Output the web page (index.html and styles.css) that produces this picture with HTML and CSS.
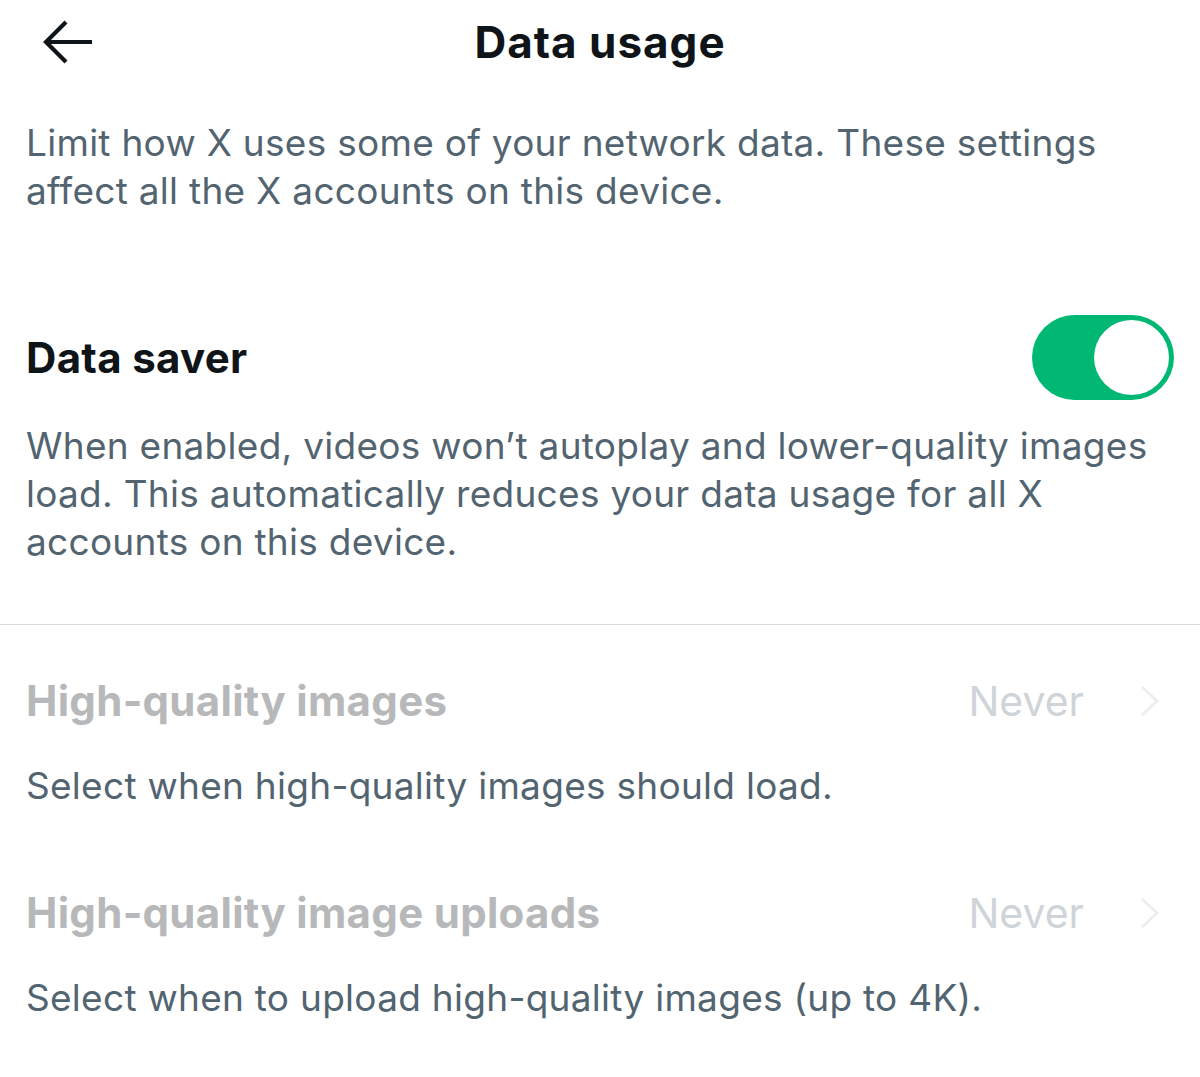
FILE: index.html
```html
<!DOCTYPE html>
<html lang="en">
    <head>
        <meta charset="UTF-8" />
        <meta name="viewport" content="width=device-width, initial-scale=1.0" />
        <title>Data usage</title>
        <link rel="stylesheet" href="styles.css">
    </head>
    <body>
        <div id="main">
            <div class="header">
                <a href="#" class="back" aria-label="Back">
                    <svg width="52" height="46" viewBox="0 0 52 46">
                        <path d="M4 23 H50 M24 3 L4 23 L24 43" fill="none" stroke="#0f1419" stroke-width="4.2" />
                    </svg>
                </a>
                <h1>Data usage</h1>
            </div>

            <p class="intro">Limit how X uses some of your network data. These settings affect all the X accounts on this device.</p>

            <div class="setting-row saver">
                <h2>Data saver</h2>
                <div class="toggle on"><span class="knob"></span></div>
            </div>
            <p class="desc saver-desc">When enabled, videos won’t autoplay and lower-quality images load. This automatically reduces your data usage for all X accounts on this device.</p>

            <div class="divider"></div>

            <div class="setting-row option first">
                <h2>High-quality images</h2>
                <div class="value">
                    <span>Never</span>
                    <svg width="24" height="34" viewBox="0 0 24 34"><path d="M4 3 L19 17 L4 31" fill="none" stroke="#eceef0" stroke-width="3" /></svg>
                </div>
            </div>
            <p class="desc option-desc">Select when high-quality images should load.</p>

            <div class="setting-row option">
                <h2>High-quality image uploads</h2>
                <div class="value">
                    <span>Never</span>
                    <svg width="24" height="34" viewBox="0 0 24 34"><path d="M4 3 L19 17 L4 31" fill="none" stroke="#eceef0" stroke-width="3" /></svg>
                </div>
            </div>
            <p class="desc option-desc">Select when to upload high-quality images (up to 4K).</p>
        </div>
    </body>
</html>
```

FILE: styles.css
```css
html, body {
    margin: 0;
    padding: 0;
    background: #ffffff;
}

#main {
    font-family: 'Inter', 'Roboto', sans-serif;
    color: #0f1419;
    display: flex;
    flex-direction: column;
}

.header {
    position: relative;
    height: 84px;
    display: flex;
    align-items: center;
    justify-content: center;
}
.header .back {
    position: absolute;
    left: 42px;
    top: 19px;
    display: block;
    line-height: 0;
}
.header h1 {
    margin: 0;
    font-size: 44px;
    font-weight: 700;
    letter-spacing: 1px;
}

.intro, .desc {
    margin: 0;
    padding: 0 26px;
    font-size: 37px;
    line-height: 48px;
    letter-spacing: 0.28px;
    color: #536471;
}
.intro {
    margin-top: 35px;
}

.setting-row {
    display: flex;
    align-items: center;
    justify-content: space-between;
    padding: 0 26px;
}
.setting-row h2 {
    margin: 0;
    font-size: 42px;
    line-height: 48px;
    font-weight: 700;
    letter-spacing: 0.3px;
}
.saver {
    margin-top: 100px;
}
.saver-desc {
    margin-top: 22px;
}

.toggle {
    width: 142px;
    height: 85px;
    border-radius: 43px;
    background: #00b874;
    display: flex;
    align-items: center;
    justify-content: flex-end;
    padding: 0 5px;
    box-sizing: border-box;
}
.toggle .knob {
    width: 75px;
    height: 75px;
    border-radius: 50%;
    background: #ffffff;
}

.divider {
    margin-top: 58px;
    height: 1px;
    background: #dcdcdc;
}

.option {
    margin-top: 78px;
}
.option.first {
    margin-top: 51px;
}
.option h2 {
    color: #b7b8b9;
}
.option .value {
    display: flex;
    align-items: center;
    gap: 54px;
    font-size: 41px;
    color: #cfd4d8;
    margin-right: 12px;
}
.option-desc {
    margin-top: 36px;
}
```
